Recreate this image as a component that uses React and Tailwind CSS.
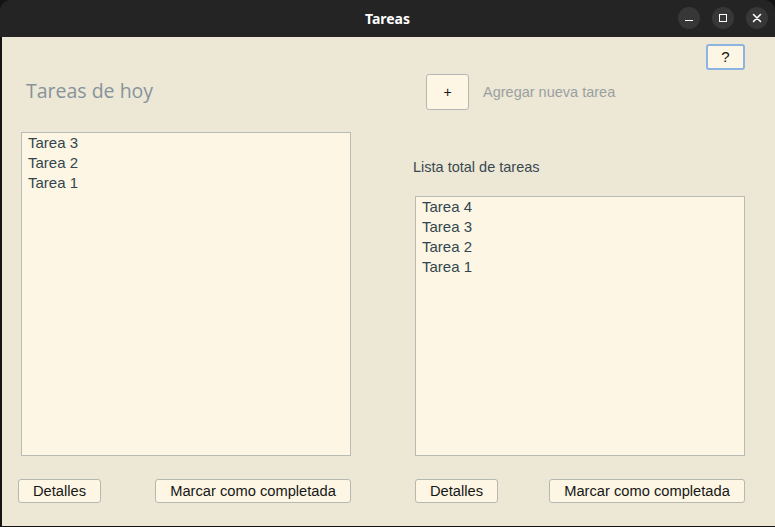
import React from "react";

const sans = { fontFamily: '"Liberation Sans", Arial, sans-serif' };

function Btn({ children, className = "" }) {
  return (
    <button
      className={`flex items-center justify-center rounded-[3px] border border-[#b5b8b2] bg-[#fdf6e4] text-[14.7px] leading-none text-[#161616] ${className}`}
      style={sans}
    >
      {children}
    </button>
  );
}

function List({ items, className = "" }) {
  return (
    <div className={`flex flex-col border border-[#b8bbb6] bg-[#fdf6e4] pl-[6px] ${className}`} style={sans}>
      {items.map((t) => (
        <div key={t} className="h-[20px] text-[15px] leading-[20px] text-[#33464f]">
          {t}
        </div>
      ))}
    </div>
  );
}

export default function App() {
  return (
    <div className="flex h-[527px] w-[775px] flex-col overflow-hidden bg-[#141414]">
      {/* title bar */}
      <div className="relative flex h-[37px] shrink-0 items-center justify-center rounded-t-[11px] bg-[#242424]">
        <span className="text-[14px] font-bold text-white" style={{ fontFamily: '"Noto Sans", "DejaVu Sans", sans-serif' }}>
          Tareas
        </span>
        <div className="absolute right-[7px] top-[7px] flex gap-[12px]">
          <div className="flex h-[22px] w-[22px] items-center justify-center rounded-full bg-[#373737]">
            <div className="mt-[5px] h-[1.5px] w-[8px] bg-white" />
          </div>
          <div className="flex h-[22px] w-[22px] items-center justify-center rounded-full bg-[#373737]">
            <div className="h-[8px] w-[8px] border-[1.5px] border-white" />
          </div>
          <div className="flex h-[22px] w-[22px] items-center justify-center rounded-full bg-[#373737]">
            <svg width="10" height="10" viewBox="0 0 10 10">
              <path d="M1.5 1.5 L8.5 8.5 M8.5 1.5 L1.5 8.5" stroke="white" strokeWidth="1.6" strokeLinecap="round" />
            </svg>
          </div>
        </div>
      </div>

      {/* body */}
      <div className="ml-[2px] mb-[1px] flex flex-1 flex-col bg-[#ede7d6] pt-[7px]">
        <div className="flex justify-end pr-[30px]">
          <button
            className="flex h-[26px] w-[39px] items-center justify-center rounded-[3px] border-2 border-[#8cb4e0] bg-[#fdf6e4] text-[15px] text-[#111]"
            style={sans}
          >
            ?
          </button>
        </div>

        <div className="flex flex-1">
          {/* left column */}
          <div className="flex w-[385px] flex-col">
            <div
              className="ml-[24px] mt-[9px] h-[24px] text-[19.5px] leading-[24px] text-[#87939a]"
              style={{ fontFamily: '"Open Sans", "Noto Sans", sans-serif' }}
            >
              Tareas de hoy
            </div>
            <List items={["Tarea 3", "Tarea 2", "Tarea 1"]} className="ml-[19px] mt-[29px] h-[324px] w-[330px]" />
            <div className="ml-[16px] mt-[23px] flex">
              <Btn className="h-[24px] w-[83px]">Detalles</Btn>
              <Btn className="ml-[54px] h-[24px] w-[196px]">Marcar como completada</Btn>
            </div>
          </div>

          {/* right column */}
          <div className="flex flex-1 flex-col">
            <div className="ml-[39px] mt-[4px] flex items-center">
              <Btn className="h-[36px] w-[43px] text-[14px]">+</Btn>
              <span className="ml-[14px] mt-[2px] text-[14.5px] text-[#9aa0a0]" style={sans}>
                Agregar nueva tarea
              </span>
            </div>
            <div className="ml-[26px] mt-[47px] h-[20px] text-[14.5px] leading-[20px] text-[#3a4950]" style={sans}>
              Lista total de tareas
            </div>
            <List items={["Tarea 4", "Tarea 3", "Tarea 2", "Tarea 1"]} className="ml-[28px] mt-[19px] h-[260px] w-[330px]" />
            <div className="ml-[28px] mt-[23px] flex">
              <Btn className="h-[24px] w-[83px]">Detalles</Btn>
              <Btn className="ml-[51px] h-[24px] w-[196px]">Marcar como completada</Btn>
            </div>
          </div>
        </div>
      </div>
    </div>
  );
}
